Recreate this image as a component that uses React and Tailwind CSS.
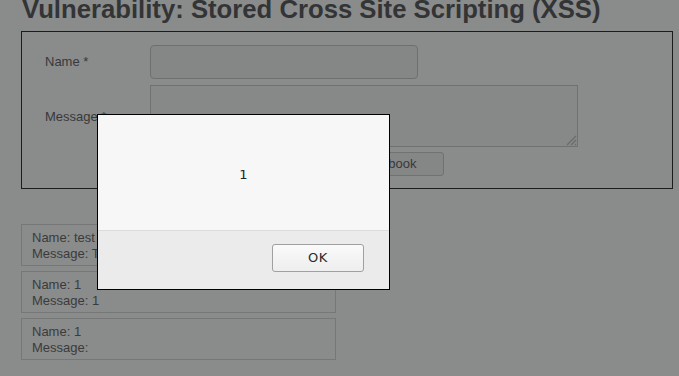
export default function App() {
  const entries = [
    { name: "test", msg: "This is a test comment." },
    { name: "1", msg: "1" },
    { name: "1", msg: "" },
  ];
  return (
    <div className="relative w-[679px] h-[376px] overflow-hidden bg-[#8a8b8b]" style={{ fontFamily: '"Liberation Sans", Arial, sans-serif' }}>
      <div className="pl-[21px] pr-[6px] -mt-[6px]">
        <h1 className="text-[25.7px] leading-[30px] font-bold text-[#333435] pl-[1px] h-[37px] whitespace-nowrap">
          Vulnerability: Stored Cross Site Scripting (XSS)
        </h1>
        <div className="border border-[#1c1c1c] h-[158px] flex flex-col pt-[13px] pl-[23px]">
          <div className="flex items-center h-[34px]">
            <div className="w-[105px] text-[13px] text-[#383939]">Name *</div>
            <div className="w-[268px] h-[34px] rounded-[4px] border border-[#6e6f70] bg-[#858686]" />
          </div>
          <div className="flex mt-[6px]">
            <div className="w-[105px] text-[13px] text-[#383939] pt-[22px]">Message *</div>
            <div className="relative w-[428px] h-[62px] border border-[#707172] bg-[#878888]">
              <svg className="absolute right-0 bottom-0" width="12" height="12" viewBox="0 0 12 12">
                <path d="M11 2 L2 11 M11 6 L6 11 M11 10 L10 11" stroke="#6a6b6b" strokeWidth="1.2" />
              </svg>
            </div>
          </div>
          <div className="flex mt-[5px] pl-[105px]">
            <div className="ml-[143px] w-[151px] h-[24px] rounded-[3px] border border-[#707172] bg-[#858686] text-[13px] text-[#383939] flex items-center pl-[30px]">
              Sign Guestbook
            </div>
          </div>
        </div>
        <div className="mt-[35px] flex flex-col gap-[5px] w-[315px]">
          {entries.map((e, i) => (
            <div key={i} className="h-[42px] border border-[#767777] pl-[10px] pt-[5px] text-[13px] leading-[16px] text-[#3a3b3b]">
              <div>Name: {e.name}</div>
              <div>Message: {e.msg}</div>
            </div>
          ))}
        </div>
      </div>

      <div className="absolute left-[97px] top-[114px] w-[293px] h-[176px] border border-black flex flex-col" style={{ fontFamily: '"DejaVu Sans", sans-serif' }}>
        <div className="h-[116px] bg-[#f7f7f7] border-b border-[#dcdcdc] flex items-center justify-center pt-[4px] text-[13px] text-[#222]">
          1
        </div>
        <div className="flex-1 bg-[#ebebeb] flex items-start justify-end pr-[25px] pt-[13px]">
          <div className="w-[92px] h-[28px] rounded-[3px] border border-[#a0a0a0] bg-gradient-to-b from-[#fafafa] to-[#eeeeee] flex items-center justify-center text-[13px] text-[#2a2a2a] tracking-[0.5px]">
            OK
          </div>
        </div>
      </div>
    </div>
  );
}
